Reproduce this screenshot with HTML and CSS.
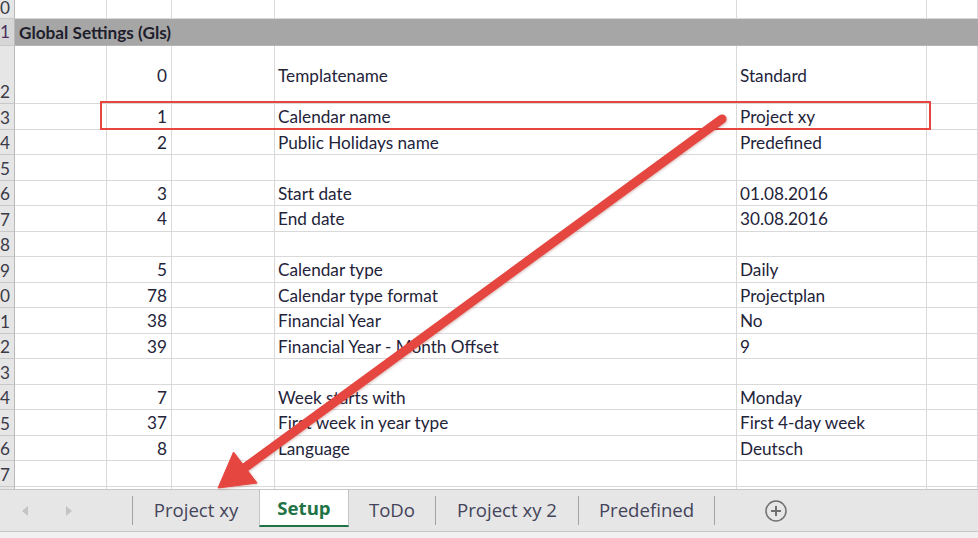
FILE: index.html
```html
<!DOCTYPE html>
<html>
<head>
<meta charset="utf-8">
<link rel="stylesheet" href="styles.css">
</head>
<body>
<div class="app">
  <div class="sheet">
    <div class="row r-top"><div class="cell rh">0</div><div class="cell"></div><div class="cell"></div><div class="cell"></div><div class="cell"></div><div class="cell"></div><div class="cell"></div></div>
    <div class="row r-band"><div class="cell rh rh-sel">1</div><div class="cell band">Global Settings (Gls)</div></div>
    <div class="row r-tall"><div class="cell rh">2</div><div class="cell"></div><div class="cell num">0</div><div class="cell"></div><div class="cell">Templatename</div><div class="cell">Standard</div><div class="cell"></div></div>
    <div class="row"><div class="cell rh">3</div><div class="cell"></div><div class="cell num">1</div><div class="cell"></div><div class="cell">Calendar name</div><div class="cell">Project xy</div><div class="cell"></div></div>
    <div class="row"><div class="cell rh">4</div><div class="cell"></div><div class="cell num">2</div><div class="cell"></div><div class="cell">Public Holidays name</div><div class="cell">Predefined</div><div class="cell"></div></div>
    <div class="row"><div class="cell rh">5</div><div class="cell"></div><div class="cell num"></div><div class="cell"></div><div class="cell"></div><div class="cell"></div><div class="cell"></div></div>
    <div class="row"><div class="cell rh">6</div><div class="cell"></div><div class="cell num">3</div><div class="cell"></div><div class="cell">Start date</div><div class="cell">01.08.2016</div><div class="cell"></div></div>
    <div class="row"><div class="cell rh">7</div><div class="cell"></div><div class="cell num">4</div><div class="cell"></div><div class="cell">End date</div><div class="cell">30.08.2016</div><div class="cell"></div></div>
    <div class="row"><div class="cell rh">8</div><div class="cell"></div><div class="cell num"></div><div class="cell"></div><div class="cell"></div><div class="cell"></div><div class="cell"></div></div>
    <div class="row"><div class="cell rh">9</div><div class="cell"></div><div class="cell num">5</div><div class="cell"></div><div class="cell">Calendar type</div><div class="cell">Daily</div><div class="cell"></div></div>
    <div class="row"><div class="cell rh">0</div><div class="cell"></div><div class="cell num">78</div><div class="cell"></div><div class="cell">Calendar type format</div><div class="cell">Projectplan</div><div class="cell"></div></div>
    <div class="row"><div class="cell rh">1</div><div class="cell"></div><div class="cell num">38</div><div class="cell"></div><div class="cell">Financial Year</div><div class="cell">No</div><div class="cell"></div></div>
    <div class="row"><div class="cell rh">2</div><div class="cell"></div><div class="cell num">39</div><div class="cell"></div><div class="cell">Financial Year - Month Offset</div><div class="cell">9</div><div class="cell"></div></div>
    <div class="row"><div class="cell rh">3</div><div class="cell"></div><div class="cell num"></div><div class="cell"></div><div class="cell"></div><div class="cell"></div><div class="cell"></div></div>
    <div class="row"><div class="cell rh">4</div><div class="cell"></div><div class="cell num">7</div><div class="cell"></div><div class="cell">Week starts with</div><div class="cell">Monday</div><div class="cell"></div></div>
    <div class="row"><div class="cell rh">5</div><div class="cell"></div><div class="cell num">37</div><div class="cell"></div><div class="cell">First week in year type</div><div class="cell">First 4-day week</div><div class="cell"></div></div>
    <div class="row"><div class="cell rh">6</div><div class="cell"></div><div class="cell num">8</div><div class="cell"></div><div class="cell">Language</div><div class="cell">Deutsch</div><div class="cell"></div></div>
    <div class="row"><div class="cell rh">7</div><div class="cell"></div><div class="cell num"></div><div class="cell"></div><div class="cell"></div><div class="cell"></div><div class="cell"></div></div>
    <div class="row"><div class="cell rh"></div><div class="cell"></div><div class="cell num"></div><div class="cell"></div><div class="cell"></div><div class="cell"></div><div class="cell"></div></div>
  </div>

  <div class="tabbar">
    <div class="nav">
      <svg class="nav-arrow" width="8" height="12" viewBox="0 0 8 12"><polygon points="7,1 1,6 7,11" fill="#c4c4c4"/></svg>
      <svg class="nav-arrow" width="8" height="12" viewBox="0 0 8 12"><polygon points="1,1 7,6 1,11" fill="#c4c4c4"/></svg>
    </div>
    <div class="sep"></div>
    <div class="tab tab-1">Project xy</div>
    <div class="tab tab-active">Setup</div>
    <div class="tab tab-3">ToDo</div>
    <div class="sep"></div>
    <div class="tab tab-4">Project xy 2</div>
    <div class="sep"></div>
    <div class="tab tab-5">Predefined</div>
    <div class="sep"></div>
    <div class="add">
      <svg width="24" height="24" viewBox="0 0 24 24"><circle cx="12" cy="12" r="10" fill="none" stroke="#6f6f6f" stroke-width="1.5"/><path d="M12 7v10M7 12h10" stroke="#6f6f6f" stroke-width="2"/></svg>
    </div>
  </div>
  <div class="status"></div>

  <div class="highlight"></div>
  <svg class="arrow" width="978" height="538" viewBox="0 0 978 538">
    <g fill="#e5463f" stroke="#e5463f">
      <line x1="722" y1="119" x2="243" y2="469" stroke-width="9" stroke-linecap="round"/>
      <polygon points="218,488 233.5,452 257,483" stroke-width="1" stroke-linejoin="round"/>
    </g>
  </svg>
</div>
</body>
</html>
```
FILE: styles.css
```css
html, body {
  margin: 0;
  padding: 0;
  background: #ffffff;
}

.app {
  position: relative;
  width: 978px;
  height: 538px;
  overflow: hidden;
  display: flex;
  flex-direction: column;
  font-family: Lato, "Liberation Sans", sans-serif;
}

.sheet {
  height: 489px;
  flex: none;
  overflow: hidden;
  background: #ffffff;
}

.row {
  display: grid;
  grid-template-columns: 15px 92px 65px 103px 462px 190px 1fr;
  height: 25.53px;
}

.r-top { height: 19px; }
.r-band { height: 27px; }
.r-tall { height: 58px; }

.cell {
  box-sizing: border-box;
  border-right: 1px solid #d9d9d9;
  border-bottom: 1px solid #d9d9d9;
  display: flex;
  align-items: center;
  padding: 1px 3px 0 3px;
  white-space: nowrap;
  overflow: hidden;
  font-size: 17.2px;
  color: #23233a;
}

.num {
  justify-content: flex-end;
  padding-right: 4px;
}

.rh {
  background: #e6e6e6;
  border-right: 1px solid #b9b9b9;
  border-bottom: 1px solid #c8c8c8;
  align-items: flex-end;
  padding: 0 0 1px 0;
  color: #3a3a48;
}

.r-top .rh {
  align-items: flex-start;
  padding: 0;
  line-height: 15px;
}

.rh-sel {
  background: #d6d6d6;
  align-items: center;
  color: #4a2f5c;
}

.band {
  grid-column: 2 / -1;
  background: #a6a6a6;
  border-right: none;
  border-bottom: 1px solid #b4b4b4;
  font-weight: 700;
  color: #1e1e2c;
  padding-left: 4px;
}

.tabbar {
  box-sizing: border-box;
  height: 43px;
  flex: none;
  display: flex;
  align-items: stretch;
  background: #e6e6e6;
  border-top: 1px solid #c6c6c6;
  border-bottom: 1px solid #c6c6c6;
  font-family: "Open Sans", "Noto Sans", sans-serif;
  font-size: 18.6px;
  color: #44445a;
}

.status {
  flex: 1;
  background: #f1f1f1;
}

.nav {
  width: 132px;
  display: flex;
  align-items: center;
  padding-left: 21px;
  gap: 36px;
  box-sizing: border-box;
}

.nav-arrow { display: block; }

.sep {
  width: 1px;
  background: #a3a3a3;
  margin: 6px 0;
}

.tab {
  display: flex;
  align-items: center;
  justify-content: center;
  box-sizing: border-box;
  white-space: nowrap;
  padding-bottom: 2px;
}

.tab-1 { width: 126px; }
.tab-3 { width: 86px; }
.tab-4 { width: 142px; }
.tab-5 { width: 135px; }

.tab-active {
  width: 90px;
  height: 37px;
  align-self: flex-start;
  background: #ffffff;
  border-left: 1px solid #c3c3c3;
  border-right: 1px solid #c3c3c3;
  border-bottom: 2px solid #217346;
  color: #217346;
  font-weight: 700;
  padding-top: 0;
  padding-bottom: 0;
}

.add {
  width: 122px;
  display: flex;
  align-items: center;
  justify-content: center;
}

.add svg { display: block; }

.highlight {
  position: absolute;
  left: 100px;
  top: 101px;
  width: 831px;
  height: 29px;
  box-sizing: border-box;
  border: 2px solid #e8453e;
  pointer-events: none;
}

.arrow {
  position: absolute;
  left: 0;
  top: 0;
  pointer-events: none;
  filter: drop-shadow(1px 1px 1px rgba(120, 20, 10, 0.25));
}
```
